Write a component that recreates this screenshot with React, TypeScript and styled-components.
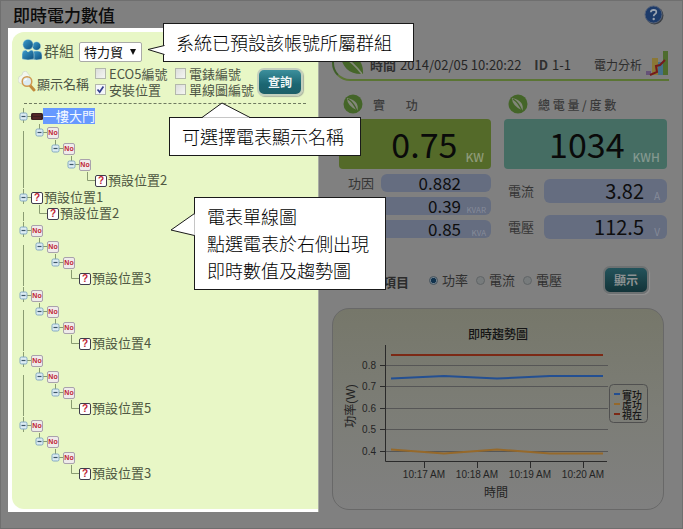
import React from "react";
import styled, { createGlobalStyle } from "styled-components";

const GlobalStyle = createGlobalStyle`
  * { box-sizing: border-box; }
  body {
    margin: 0;
    background: #808080;
    font-family: "Noto Sans CJK TC", sans-serif;
    font-size: 13px;
    line-height: 16px;
    color: #1c1c1c;
  }
`;

const Page = styled.div`
  position: relative;
  display: flex;
  flex-direction: column;
  min-height: 100vh;
  border: 1px solid #6f6f6f;
`;

const Header = styled.header`
  display: flex;
  align-items: center;
  justify-content: space-between;
  height: 27px;
  padding: 0 18px 0 12px;
`;

const Title = styled.h1`
  margin: 0;
  font-size: 17px;
  line-height: 24px;
  font-weight: 500;
  color: #0c0c0c;
`;

const HelpButton = styled.button`
  display: flex;
  padding: 0;
  border: 0;
  background: none;
`;

const Main = styled.main`
  display: flex;
  flex: 1;
  padding: 0 0 16px 7px;
`;

const SidePanel = styled.section`
  flex: 0 0 311px;
  display: flex;
  padding: 4px 0 3px 4px;
  background: #fff;
  border-right: 1px solid #a8aca2;
`;

const SideBody = styled.div`
  flex: 1;
  min-width: 0;
  padding: 4px 12px 24px 6px;
  background: #e8f7c6;
  border-radius: 12px 0 0 12px;
`;

const GroupRow = styled.div`
  display: flex;
  align-items: center;
  height: 28px;
  padding-left: 4px;
`;

const GroupLabel = styled.label`
  margin: 2px 5px 0 2px;
  font-size: 15px;
  color: #55604a;
`;

const SelectBox = styled.div`
  display: grid;
  align-items: center;
  width: 63px;
  margin-top: 3px;
  svg {
    grid-area: 1 / 1;
    justify-self: end;
    margin-right: 5px;
    pointer-events: none;
  }
`;

const Select = styled.select`
  grid-area: 1 / 1;
  appearance: none;
  width: 100%;
  height: 20px;
  padding: 0 0 0 4px;
  border: 1px solid #a9aaa6;
  border-radius: 2px;
  background: #fff;
  font: 13px/18px "Noto Sans CJK TC", sans-serif;
  color: #111;
`;

const FilterRow = styled.div`
  display: flex;
  align-items: center;
  height: 36px;
`;

const FilterName = styled.span`
  width: 58px;
  margin-top: 3px;
  padding-left: 1px;
  color: #4d5545;
  white-space: nowrap;
`;

const Checks = styled.div`
  display: grid;
  grid-template-columns: 80px 82px;
  padding-left: 1px;
`;

const CheckLabel = styled.label`
  display: flex;
  align-items: center;
  gap: 3px;
  height: 16px;
  white-space: nowrap;
  color: #4d5545;
`;

const CheckBox = styled.input`
  appearance: none;
  width: 11px;
  height: 11px;
  margin: 0 0 2px;
  border: 1px solid #b3b8ac;
  background: linear-gradient(135deg, #dcdedb, #f4f5f2);
  &:checked {
    background: #f4f6fb
      url("data:image/svg+xml,%3Csvg xmlns='http://www.w3.org/2000/svg' viewBox='0 0 9 9'%3E%3Cpath d='M1.5 4.5L3.7 7L7.4 1.6' fill='none' stroke='%23343f8c' stroke-width='1.7'/%3E%3C/svg%3E");
  }
`;

const ActionButton = styled.button<{ $dim?: boolean }>`
  width: 46px;
  height: 28px;
  padding: 0;
  border: 2px solid ${(p) => (p.$dim ? "#6d7172" : "#c3cfbd")};
  border-radius: 7px;
  background: ${(p) =>
    p.$dim
      ? "linear-gradient(#23535b, #123338)"
      : "linear-gradient(#3c8f9c, #1b6672 60%, #1d5e68)"};
  box-shadow: 1px 1px 1px ${(p) => (p.$dim ? "#929292" : "#a9b2a0")};
  color: ${(p) => (p.$dim ? "#8d9293" : "#f2f7f7")};
  font: 700 12px/16px "Noto Sans CJK TC", sans-serif;
`;

const Divider = styled.hr`
  margin: 3px 0 4px 6px;
  border: 0;
  border-top: 1px dashed #6f7a60;
`;

const Tree = styled.ul`
  margin: 0 0 0 1px;
  padding: 0;
  list-style: none;
`;

const TreeGroup = styled.li<{ $last?: boolean }>`
  margin-bottom: 1px;
  background: ${(p) =>
    p.$last
      ? "none"
      : "linear-gradient(#8a9c72, #8a9c72) 4px 23px / 1px calc(100% - 23px) no-repeat"};
`;

const TreeRow = styled.div<{ $level: number }>`
  display: flex;
  align-items: center;
  height: 16px;
  padding-left: ${(p) => p.$level * 16}px;
  color: #4f5842;
`;

const Selected = styled.span`
  height: 16px;
  background: #6699ff;
  color: #f3f8ff;
`;

const NodeName = styled.span`
  padding-left: 1px;
`;

const Dashboard = styled.section`
  flex: 1;
  min-width: 0;
  display: flex;
  flex-direction: column;
  padding: 20px 13px 0 13px;
`;

const InfoBar = styled.div`
  display: flex;
  align-items: center;
  height: 33px;
  padding: 3px 0 0 6px;
  border: solid;
  border-width: 0 0 2px 2px;
  border-color: #5b7534 #5b7534 #5b7534 #3e5e28;
  border-bottom-left-radius: 18px;
  color: #262626;
  white-space: nowrap;
  svg { flex: none; }
`;

const Strong = styled.b<{ $left: number }>`
  margin: 0 4px 0 ${(p) => p.$left}px;
  font-weight: 700;
  color: #303030;
`;

const AnalysisLink = styled.a`
  display: flex;
  align-items: center;
  gap: 3px;
  margin-left: auto;
  margin-bottom: 4px;
  font-size: 12px;
  color: #2d2d2d;
  text-decoration: none;
  span { margin-top: 4px; }
`;

const Meters = styled.div`
  display: grid;
  grid-template-columns: 152fr 163fr;
  column-gap: 13px;
  margin: 12px 2px 0 7px;
`;

const MeterTitle = styled.h2`
  display: flex;
  align-items: center;
  gap: 10px;
  height: 22px;
  margin: 0 0 4px;
  padding-left: 4px;
  font-size: 12px;
  font-weight: 500;
  color: #3a3a3a;
  white-space: pre;
  span { padding-top: 2px; }
`;

const MainValue = styled.div<{ $color: string; $unit: string }>`
  display: flex;
  align-items: center;
  justify-content: flex-end;
  height: 50px;
  padding-right: 7px;
  border-radius: 4px;
  background: ${(p) => p.$color};
  color: #0a0a0a;
  font-size: 34px;
  line-height: 40px;
  small {
    align-self: flex-end;
    margin: 0 0 3px 8px;
    font-size: 12px;
    line-height: 18px;
    font-weight: 500;
    color: ${(p) => p.$unit};
  }
`;

const Readings = styled.dl<{ $big?: boolean }>`
  display: grid;
  grid-template-columns: 40px 1fr;
  align-items: center;
  gap: ${(p) => (p.$big ? "12px 0" : "5px 2px")};
  margin: ${(p) => (p.$big ? "10px" : "5px")} 0 0;
  dt {
    padding-left: ${(p) => (p.$big ? 4 : 9)}px;
    color: #353535;
    white-space: nowrap;
  }
`;

const Pill = styled.dd<{ $big?: boolean }>`
  display: flex;
  align-items: center;
  justify-content: flex-end;
  height: ${(p) => (p.$big ? 24 : 18)}px;
  margin: 0;
  border-radius: 6px;
  background: #656d80;
  color: #0e0e0e;
  font-size: ${(p) => (p.$big ? 20 : 17)}px;
  line-height: 18px;
  small {
    align-self: flex-end;
    width: ${(p) => (p.$big ? 23 : 30)}px;
    padding-right: ${(p) => (p.$big ? 7 : 5)}px;
    text-align: right;
    font-size: ${(p) => (p.$big ? 10 : 8)}px;
    line-height: ${(p) => (p.$big ? 14 : 10)}px;
    color: #858b99;
  }
`;

const ItemForm = styled.form`
  display: flex;
  align-items: center;
  height: 28px;
  margin: 27px 20px 0 10px;
  gap: 8px;
  color: #333;
  white-space: nowrap;
`;

const ItemName = styled.span`
  display: flex;
  align-items: center;
  margin: 4px 12px 0 0;
  font-weight: 700;
  color: #2c2c2c;
  svg {
    width: 15px;
    height: 15px;
  }
`;

const RadioLabel = styled.label`
  display: flex;
  align-items: center;
  gap: 4px;
  color: #303030;
`;

const Radio = styled.input`
  appearance: none;
  width: 9px;
  height: 9px;
  margin: 0;
  border: 1px solid #606466;
  border-radius: 50%;
  background: #777b7c;
  &:checked {
    border-color: #46535d;
    background: radial-gradient(circle, #12334e 45%, #71828e 60%);
  }
`;

const Push = styled.div`
  margin-left: auto;
  display: flex;
`;

const ChartPanel = styled.figure`
  display: flex;
  margin: 14px 5px 0 0;
  border: 1px solid #686868;
  border-radius: 17px;
  background: linear-gradient(#76776a, #7c7d76 50%, #808080);
`;

const ChartSvg = styled.svg`
  display: block;
  width: 100%;
  height: auto;
  font-family: "Liberation Sans", "Noto Sans CJK TC", sans-serif;
  font-size: 10px;
  fill: #242424;
`;

const Callout = styled.aside<{ $x: number; $y: number; $w: number }>`
  position: absolute;
  left: ${(p) => p.$x}px;
  top: ${(p) => p.$y}px;
  width: ${(p) => p.$w}px;
  padding: 5px 12px;
  border: 1px solid #1a1a1a;
  background: #fff;
  color: #000;
  font-size: 18px;
  line-height: 27px;
  font-weight: 300;
  white-space: nowrap;
`;

const Pointer = styled.svg<{ $x: number; $y: number }>`
  position: absolute;
  left: ${(p) => p.$x}px;
  top: ${(p) => p.$y}px;
  fill: #fff;
  stroke: #1a1a1a;
`;

const LeafBadge = () => (
  <svg width="20" height="20" viewBox="0 0 20 20" aria-hidden="true">
    <circle cx="10" cy="10" r="9.500" fill="#446528" />
    <path d="M4 4Q4 12 14.500 16.500Q16.500 6.500 4 4Z" fill="#828779" />
    <path d="M5 5Q11 9 14 17" stroke="#446528" strokeWidth="1.300" fill="none" />
  </svg>
);

const BigLeaf = () => (
  <svg width="24" height="24" viewBox="0 0 24 24" aria-hidden="true">
    <path d="M1 1C13 -1 24 6 23 21C11 22 1 15 1 1Z" fill="#46662a" />
    <path d="M2 3Q13 9 22 21" fill="none" stroke="#858b7b" strokeWidth="1.600" />
  </svg>
);

const Users = () => (
  <svg width="20" height="22" viewBox="0 0 20 22" aria-hidden="true">
    <defs>
      <linearGradient id="person" x1="0" y1="0" x2="1" y2="1">
        <stop offset="0" stopColor="#3fa0cf" />
        <stop offset="1" stopColor="#0b4d7d" />
      </linearGradient>
    </defs>
    <g fill="url(#person)" stroke="#d9efe0" strokeWidth=".5">
      <circle cx="14.500" cy="7" r="4.300" />
      <path d="M9 20V15Q10 12 13 12H16Q20 12 20 16V20Q15 22 9 20Z" />
      <circle cx="6" cy="5.500" r="5.200" />
      <path d="M0 20V15Q0 11 4 11L6 13L9 11Q12 11 12 15V20Q6 22 0 20Z" />
    </g>
  </svg>
);

const Search = () => (
  <svg width="18" height="22" viewBox="0 0 18 22" aria-hidden="true">
    <path d="M0 9Q0 5 4 4Q4 0 8 0L12 5L6 13Q0 13 0 9Z" fill="#f2f6ee" stroke="#cfd8c6" strokeWidth=".7" />
    <path d="M12 14.500L16 19" stroke="#c18a3c" strokeWidth="3" strokeLinecap="round" />
    <circle cx="9" cy="10.500" r="4.800" fill="#dcebf2" stroke="#d09a50" strokeWidth="1.500" />
    <path d="M6.500 10Q7 8 9 7.800" stroke="#fff" strokeWidth="1.200" fill="none" />
  </svg>
);

const Toggle = ({ level }: { level: number }) => (
  <svg width="12" height="16" viewBox="0 0 12 16" aria-hidden="true">
    <path d={level === 0 ? "M4.500 0V15M8 8.500H12" : "M4.500 0V5M8 8.500H12"} stroke="#8a9c72" fill="none" />
    <rect x="1" y="5" width="7" height="7" rx="1.500" fill="#dcecf3" stroke="#83a9c0" />
    <path d="M2.500 8.500H6.500" stroke="#3c5668" strokeWidth="1.200" />
  </svg>
);

const Elbow = () => (
  <svg width="12" height="16" viewBox="0 0 12 16" aria-hidden="true">
    <path d="M4.500 0V8.500H12" stroke="#8a9c72" fill="none" />
  </svg>
);

const NodeIcon = styled.span<{ $unknown?: boolean }>`
  display: flex;
  align-items: center;
  justify-content: center;
  width: 12px;
  height: 12px;
  margin-top: 1px;
  border: 1px solid ${(p) => (p.$unknown ? "#3f3c4c" : "#a9a2ac")};
  border-radius: 2px;
  background: ${(p) => (p.$unknown ? "#fff" : "#efebea")};
  color: #c01f33;
  font: 700 ${(p) => (p.$unknown ? 10 : 7)}px/10px "Liberation Sans", sans-serif;
`;

const Device = () => (
  <svg width="12" height="16" viewBox="0 0 12 16" aria-hidden="true">
    <rect x="0" y="5" width="12" height="7" rx="1.500" fill="#3a2020" />
    <path d="M2 7H10M2 10H10" stroke="#6b2c2c" />
  </svg>
);

type Leaf = { level: number; name: string };
type Group = { selected?: string; unknown?: string; branches: number; leaf: Leaf };

const groups: Group[] = [
  { selected: "一樓大門", branches: 3, leaf: { level: 4, name: "預設位置2" } },
  { unknown: "預設位置1", branches: 0, leaf: { level: 1, name: "預設位置2" } },
  { branches: 2, leaf: { level: 3, name: "預設位置3" } },
  { branches: 2, leaf: { level: 3, name: "預設位置4" } },
  { branches: 2, leaf: { level: 3, name: "預設位置5" } },
  { branches: 2, leaf: { level: 3, name: "預設位置3" } },
];

const TreeView = () => (
  <Tree>
    {groups.map((g, i) => (
      <TreeGroup key={i} $last={i === groups.length - 1}>
        <TreeRow $level={0}>
          <Toggle level={0} />
          {g.selected ? (
            <>
              <Device />
              <Selected>{g.selected}</Selected>
            </>
          ) : g.unknown ? (
            <>
              <NodeIcon $unknown>?</NodeIcon>
              <NodeName>{g.unknown}</NodeName>
            </>
          ) : (
            <NodeIcon>No</NodeIcon>
          )}
        </TreeRow>
        {Array.from({ length: g.branches }, (_, b) => (
          <TreeRow key={b} $level={b + 1}>
            <Toggle level={b + 1} />
            <NodeIcon>No</NodeIcon>
          </TreeRow>
        ))}
        <TreeRow $level={g.leaf.level}>
          <Elbow />
          <NodeIcon $unknown>?</NodeIcon>
          <NodeName>{g.leaf.name}</NodeName>
        </TreeRow>
      </TreeGroup>
    ))}
  </Tree>
);

const yTicks: [string, number][] = [
  ["0.8", 56],
  ["0.7", 77],
  ["0.6", 99],
  ["0.5", 120],
  ["0.4", 142],
];
const xTicks: [string, number][] = [
  ["10:17 AM", 91],
  ["10:18 AM", 144],
  ["10:19 AM", 197],
  ["10:20 AM", 250],
];
const series: [string, string, string][] = [
  ["實功", "#234f92", "58,69.500 111,67 164,69.500 217,67 270,67"],
  ["虛功", "#96692a", "58,140.500 111,144.500 164,140.500 217,144.500 270,144.500"],
  ["視在", "#7c2915", "58,46 270,46"],
];

const TrendChart = () => (
  <ChartSvg viewBox="0 0 330 200" role="img" aria-label="即時趨勢圖">
    <text x="165" y="30" textAnchor="middle" fontSize="12" fontWeight="500" fill="#141414">
      即時趨勢圖
    </text>
    {yTicks.map(([label, y]) => (
      <g key={label}>
        <path d={`M53 ${y + 0.5}H275`} stroke="#565656" />
        <path d={`M47 ${y + 0.5}H53`} stroke="#2a2a2a" />
        <text x="43" y={y + 4} textAnchor="end">{label}</text>
      </g>
    ))}
    <path d="M52.500 36V152.500H274" stroke="#2a2a2a" fill="none" />
    {xTicks.map(([label, x]) => (
      <g key={label}>
        <path d={`M${x + 0.5} 153V159`} stroke="#2a2a2a" />
        <text x={x} y="169" textAnchor="middle">{label}</text>
      </g>
    ))}
    {series.map(([name, color, points]) => (
      <polyline key={name} points={points} fill="none" stroke={color} strokeWidth="2" />
    ))}
    <rect x="276.500" y="75.500" width="38" height="38" rx="4" fill="none" stroke="#505050" />
    {series.map(([name, color], i) => (
      <g key={name}>
        <path d={`M281 ${85 + i * 10}h6`} stroke={color} strokeWidth="2" />
        <text x="289" y={90 + i * 10} fontWeight="500" fill="#161616">{name}</text>
      </g>
    ))}
    <text x="163" y="188" textAnchor="middle" fontSize="12">時間</text>
    <text x="18" y="101" textAnchor="middle" fontSize="12" transform="rotate(-90 18 97)">
      功率(W)
    </text>
  </ChartSvg>
);

export default function App() {
  return (
    <Page>
      <GlobalStyle />
      <Header>
        <Title>即時電力數值</Title>
        <HelpButton aria-label="說明">
          <svg width="20" height="20" viewBox="0 0 20 20">
            <circle cx="10.500" cy="10.500" r="9" fill="#3c4046" />
            <circle cx="9.500" cy="9.500" r="8.500" fill="#1d3b6a" stroke="#56637a" />
            <path d="M6.800 7.300Q7 4.800 9.700 4.800Q12.400 4.900 12.300 7.200Q12.200 8.500 10.800 9.300Q9.700 10 9.700 11.300" fill="none" stroke="#9aa3b0" strokeWidth="1.800" />
            <circle cx="9.700" cy="14" r="1.200" fill="#9aa3b0" />
          </svg>
        </HelpButton>
      </Header>
      <Main>
        <SidePanel>
          <SideBody>
            <GroupRow>
              <Users />
              <GroupLabel htmlFor="group">群組</GroupLabel>
              <SelectBox>
                <Select id="group">
                  <option>特力貿</option>
                </Select>
                <svg width="8" height="8" viewBox="0 0 8 8" aria-hidden="true">
                  <path d="M1 1H7L4 7Z" fill="#111" />
                </svg>
              </SelectBox>
            </GroupRow>
            <FilterRow>
              <Search />
              <FilterName>顯示名稱</FilterName>
              <Checks>
                <CheckLabel><CheckBox type="checkbox" />ECO5編號</CheckLabel>
                <CheckLabel><CheckBox type="checkbox" />電錶編號</CheckLabel>
                <CheckLabel><CheckBox type="checkbox" defaultChecked />安裝位置</CheckLabel>
                <CheckLabel><CheckBox type="checkbox" />單線圖編號</CheckLabel>
              </Checks>
              <ActionButton>查詢</ActionButton>
            </FilterRow>
            <Divider />
            <TreeView />
          </SideBody>
        </SidePanel>
        <Dashboard>
          <InfoBar>
            <BigLeaf />
            <Strong $left={6}>時間</Strong>
            2014/02/05 10:20:22
            <Strong $left={13}>ID</Strong>
            1-1
            <AnalysisLink href="#analysis">
              <span>電力分析</span>
              <svg width="24" height="26" viewBox="0 0 24 26" aria-hidden="true">
                <path d="M1 21H6V25H1Z" fill="#655278" />
                <path d="M7 8H13V25H7Z" fill="#8b7836" />
                <path d="M13 12H18V25H13Z" fill="#45708a" />
                <path d="M18 1H23V25H18Z" fill="#4e6c2e" />
                <path d="M5 25L12 22L11 16L15 15L20 10" fill="none" stroke="#751a1c" strokeWidth="2" />
              </svg>
            </AnalysisLink>
          </InfoBar>
          <Meters>
            <div>
              <MeterTitle><LeafBadge /><span>實{"\u3000\u2002 "}功</span></MeterTitle>
              <MainValue $color="#546a29" $unit="#8f9b78">0.75<small>KW</small></MainValue>
              <Readings>
                <dt>功因</dt>
                <Pill>0.882<small /></Pill>
                <dt />
                <Pill>0.39<small>KVAR</small></Pill>
                <dt />
                <Pill>0.85<small>KVA</small></Pill>
              </Readings>
            </div>
            <div>
              <MeterTitle><LeafBadge /><span>總 電 量 / 度 數</span></MeterTitle>
              <MainValue $color="#456d63" $unit="#83988f">1034<small>KWH</small></MainValue>
              <Readings $big>
                <dt>電流</dt>
                <Pill $big>3.82<small>A</small></Pill>
                <dt>電壓</dt>
                <Pill $big>112.5<small>V</small></Pill>
              </Readings>
            </div>
          </Meters>
          <ItemForm onSubmit={(e) => e.preventDefault()}>
            <ItemName><LeafBadge />電力項目</ItemName>
            <RadioLabel><Radio type="radio" name="item" defaultChecked />功率</RadioLabel>
            <RadioLabel><Radio type="radio" name="item" />電流</RadioLabel>
            <RadioLabel><Radio type="radio" name="item" />電壓</RadioLabel>
            <Push><ActionButton $dim>顯示</ActionButton></Push>
          </ItemForm>
          <ChartPanel>
            <TrendChart />
          </ChartPanel>
        </Dashboard>
      </Main>

      <Callout $x={162} $y={22} $w={251}>
        系統已預設該帳號所屬群組
        <Pointer $x={-17} $y={20} width="18" height="12">
          <path d="M17.500 1.500L1 5.500L17.500 10.500" />
        </Pointer>
      </Callout>
      <Callout $x={168} $y={116} $w={192}>
        可選擇電表顯示名稱
        <Pointer $x={31} $y={-16} width="50" height="17">
          <path d="M1 15.500L21 1L49 15.500" />
          <path d="M2 16H48" stroke="#fff" />
        </Pointer>
      </Callout>
      <Callout $x={193} $y={196} $w={192}>
        電表單線圖
        <br />
        點選電表於右側出現
        <br />
        即時數值及趨勢圖
        <Pointer $x={-25} $y={14} width="26" height="26">
          <path d="M24.500 1.500L1 18L24.500 23.500" />
          <path d="M25 3V23" stroke="#fff" />
        </Pointer>
      </Callout>
    </Page>
  );
}
